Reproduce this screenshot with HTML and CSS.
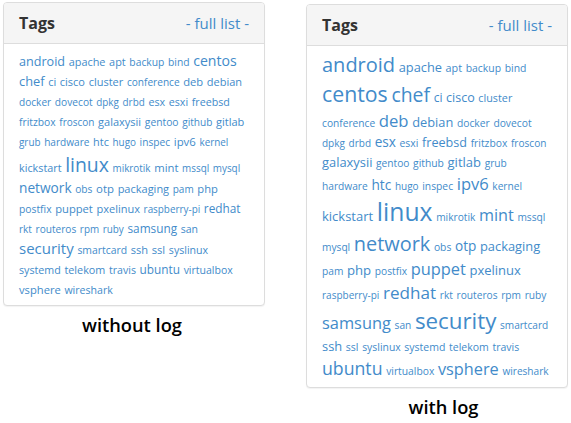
FILE: index.html
```html
<!DOCTYPE html>
<html lang="en">
<head>
<meta charset="utf-8">
<title>Tags</title>
<link rel="stylesheet" href="styles.css">
</head>
<body>
<div class="page">
  <div class="col col-a">
    <div class="panel">
      <div class="panel-heading">
        <h3 class="panel-title">Tags</h3>
        <a class="full-list" href="#">- full list -</a>
      </div>
      <div class="panel-body panel-body-a">
        <a class="tag" href="#" style="font-size:12.6px">android</a>
        <a class="tag" href="#" style="font-size:10.9px">apache</a>
        <a class="tag" href="#" style="font-size:10.9px">apt</a>
        <a class="tag" href="#" style="font-size:10.3px">backup</a>
        <a class="tag" href="#" style="font-size:10.3px">bind</a>
        <a class="tag" href="#" style="font-size:14.1px">centos</a>
        <a class="tag" href="#" style="font-size:12.8px">chef</a>
        <a class="tag" href="#" style="font-size:11px">ci</a>
        <a class="tag" href="#" style="font-size:11px">cisco</a>
        <a class="tag" href="#" style="font-size:11px">cluster</a>
        <a class="tag" href="#" style="font-size:10.1px">conference</a>
        <a class="tag" href="#" style="font-size:11.2px">deb</a>
        <a class="tag" href="#" style="font-size:11px">debian</a>
        <a class="tag" href="#" style="font-size:10.1px">docker</a>
        <a class="tag" href="#" style="font-size:10.2px">dovecot</a>
        <a class="tag" href="#" style="font-size:9.9px">dpkg</a>
        <a class="tag" href="#" style="font-size:9.9px">drbd</a>
        <a class="tag" href="#" style="font-size:10.7px">esx</a>
        <a class="tag" href="#" style="font-size:10.7px">esxi</a>
        <a class="tag" href="#" style="font-size:10.7px">freebsd</a>
        <a class="tag" href="#" style="font-size:10.3px">fritzbox</a>
        <a class="tag" href="#" style="font-size:10px">froscon</a>
        <a class="tag" href="#" style="font-size:11px">galaxysii</a>
        <a class="tag" href="#" style="font-size:10.3px">gentoo</a>
        <a class="tag" href="#" style="font-size:10.1px">github</a>
        <a class="tag" href="#" style="font-size:11px">gitlab</a>
        <a class="tag" href="#" style="font-size:9.9px">grub</a>
        <a class="tag" href="#" style="font-size:10.1px">hardware</a>
        <a class="tag" href="#" style="font-size:10.9px">htc</a>
        <a class="tag" href="#" style="font-size:9.9px">hugo</a>
        <a class="tag" href="#" style="font-size:10.2px">inspec</a>
        <a class="tag" href="#" style="font-size:11.4px">ipv6</a>
        <a class="tag" href="#" style="font-size:9.9px">kernel</a>
        <a class="tag" href="#" style="font-size:10.8px">kickstart</a>
        <a class="tag" href="#" style="font-size:19.4px">linux</a>
        <a class="tag" href="#" style="font-size:9.9px">mikrotik</a>
        <a class="tag" href="#" style="font-size:11.3px">mint</a>
        <a class="tag" href="#" style="font-size:9.9px">mssql</a>
        <a class="tag" href="#" style="font-size:9.9px">mysql</a>
        <a class="tag" href="#" style="font-size:13.7px">network</a>
        <a class="tag" href="#" style="font-size:10.2px">obs</a>
        <a class="tag" href="#" style="font-size:11.4px">otp</a>
        <a class="tag" href="#" style="font-size:11px">packaging</a>
        <a class="tag" href="#" style="font-size:10px">pam</a>
        <a class="tag" href="#" style="font-size:11.2px">php</a>
        <a class="tag" href="#" style="font-size:10.3px">postfix</a>
        <a class="tag" href="#" style="font-size:11.2px">puppet</a>
        <a class="tag" href="#" style="font-size:11px">pxelinux</a>
        <a class="tag" href="#" style="font-size:9.9px">raspberry-pi</a>
        <a class="tag" href="#" style="font-size:11.8px">redhat</a>
        <a class="tag" href="#" style="font-size:10px">rkt</a>
        <a class="tag" href="#" style="font-size:10.1px">routeros</a>
        <a class="tag" href="#" style="font-size:9.9px">rpm</a>
        <a class="tag" href="#" style="font-size:9.9px">ruby</a>
        <a class="tag" href="#" style="font-size:11.8px">samsung</a>
        <a class="tag" href="#" style="font-size:10.5px">san</a>
        <a class="tag" href="#" style="font-size:15px">security</a>
        <a class="tag" href="#" style="font-size:10.4px">smartcard</a>
        <a class="tag" href="#" style="font-size:11.1px">ssh</a>
        <a class="tag" href="#" style="font-size:11.2px">ssl</a>
        <a class="tag" href="#" style="font-size:10.6px">syslinux</a>
        <a class="tag" href="#" style="font-size:10.7px">systemd</a>
        <a class="tag" href="#" style="font-size:10.8px">telekom</a>
        <a class="tag" href="#" style="font-size:10.6px">travis</a>
        <a class="tag" href="#" style="font-size:11.8px">ubuntu</a>
        <a class="tag" href="#" style="font-size:10.5px">virtualbox</a>
        <a class="tag" href="#" style="font-size:11.2px">vsphere</a>
        <a class="tag" href="#" style="font-size:10.6px">wireshark</a>
      </div>
    </div>
    <p class="caption caption-a">without log</p>
  </div>

  <div class="col col-b">
    <div class="panel">
      <div class="panel-heading">
        <h3 class="panel-title">Tags</h3>
        <a class="full-list" href="#">- full list -</a>
      </div>
      <div class="panel-body">
        <a class="tag" href="#" style="font-size:20px">android</a>
        <a class="tag" href="#" style="font-size:12.8px">apache</a>
        <a class="tag" href="#" style="font-size:10.8px">apt</a>
        <a class="tag" href="#" style="font-size:10.4px">backup</a>
        <a class="tag" href="#" style="font-size:10.4px">bind</a>
        <a class="tag" href="#" style="font-size:21.3px">centos</a>
        <a class="tag" href="#" style="font-size:19.4px">chef</a>
        <a class="tag" href="#" style="font-size:12px">ci</a>
        <a class="tag" href="#" style="font-size:12.5px">cisco</a>
        <a class="tag" href="#" style="font-size:10.8px">cluster</a>
        <a class="tag" href="#" style="font-size:10.2px">conference</a>
        <a class="tag" href="#" style="font-size:16.7px">deb</a>
        <a class="tag" href="#" style="font-size:12.8px">debian</a>
        <a class="tag" href="#" style="font-size:10.3px">docker</a>
        <a class="tag" href="#" style="font-size:10.3px">dovecot</a>
        <a class="tag" href="#" style="font-size:10px">dpkg</a>
        <a class="tag" href="#" style="font-size:10px">drbd</a>
        <a class="tag" href="#" style="font-size:13.6px">esx</a>
        <a class="tag" href="#" style="font-size:10.4px">esxi</a>
        <a class="tag" href="#" style="font-size:12.6px">freebsd</a>
        <a class="tag" href="#" style="font-size:10.3px">fritzbox</a>
        <a class="tag" href="#" style="font-size:10.1px">froscon</a>
        <a class="tag" href="#" style="font-size:12.9px">galaxysii</a>
        <a class="tag" href="#" style="font-size:10.2px">gentoo</a>
        <a class="tag" href="#" style="font-size:10.3px">github</a>
        <a class="tag" href="#" style="font-size:13px">gitlab</a>
        <a class="tag" href="#" style="font-size:10.2px">grub</a>
        <a class="tag" href="#" style="font-size:10.2px">hardware</a>
        <a class="tag" href="#" style="font-size:13.7px">htc</a>
        <a class="tag" href="#" style="font-size:10px">hugo</a>
        <a class="tag" href="#" style="font-size:10.3px">inspec</a>
        <a class="tag" href="#" style="font-size:16.5px">ipv6</a>
        <a class="tag" href="#" style="font-size:10.2px">kernel</a>
        <a class="tag" href="#" style="font-size:13px">kickstart</a>
        <a class="tag" href="#" style="font-size:24.7px">linux</a>
        <a class="tag" href="#" style="font-size:10.2px">mikrotik</a>
        <a class="tag" href="#" style="font-size:16.2px">mint</a>
        <a class="tag" href="#" style="font-size:10.2px">mssql</a>
        <a class="tag" href="#" style="font-size:10.2px">mysql</a>
        <a class="tag" href="#" style="font-size:19.9px">network</a>
        <a class="tag" href="#" style="font-size:10.3px">obs</a>
        <a class="tag" href="#" style="font-size:13.6px">otp</a>
        <a class="tag" href="#" style="font-size:12.9px">packaging</a>
        <a class="tag" href="#" style="font-size:10.2px">pam</a>
        <a class="tag" href="#" style="font-size:13.2px">php</a>
        <a class="tag" href="#" style="font-size:10.2px">postfix</a>
        <a class="tag" href="#" style="font-size:16.4px">puppet</a>
        <a class="tag" href="#" style="font-size:13px">pxelinux</a>
        <a class="tag" href="#" style="font-size:10px">raspberry-pi</a>
        <a class="tag" href="#" style="font-size:17.1px">redhat</a>
        <a class="tag" href="#" style="font-size:10.2px">rkt</a>
        <a class="tag" href="#" style="font-size:10.2px">routeros</a>
        <a class="tag" href="#" style="font-size:10.2px">rpm</a>
        <a class="tag" href="#" style="font-size:10.2px">ruby</a>
        <a class="tag" href="#" style="font-size:16.4px">samsung</a>
        <a class="tag" href="#" style="font-size:10.2px">san</a>
        <a class="tag" href="#" style="font-size:22.3px">security</a>
        <a class="tag" href="#" style="font-size:10.1px">smartcard</a>
        <a class="tag" href="#" style="font-size:12.9px">ssh</a>
        <a class="tag" href="#" style="font-size:10.5px">ssl</a>
        <a class="tag" href="#" style="font-size:10.4px">syslinux</a>
        <a class="tag" href="#" style="font-size:10.5px">systemd</a>
        <a class="tag" href="#" style="font-size:10.5px">telekom</a>
        <a class="tag" href="#" style="font-size:10.5px">travis</a>
        <a class="tag" href="#" style="font-size:17.7px">ubuntu</a>
        <a class="tag" href="#" style="font-size:10.3px">virtualbox</a>
        <a class="tag" href="#" style="font-size:16.3px">vsphere</a>
        <a class="tag" href="#" style="font-size:10.1px">wireshark</a>
      </div>
    </div>
    <p class="caption caption-b">with log</p>
  </div>
</div>
</body>
</html>
```
FILE: styles.css
```css
body {
  margin: 0;
  font-family: "Open Sans", "DejaVu Sans", sans-serif;
  font-size: 14px;
  line-height: 1.42857;
  color: #333;
  background: #fff;
}

.page {
  display: flex;
  align-items: flex-start;
}

.col {
  width: 262px;
}

.col-a {
  margin: 2px 0 0 3px;
}

.col-b {
  margin: 4px 0 0 41px;
}

.panel {
  background: #fff;
  border: 1px solid #ddd;
  border-radius: 4px;
  box-shadow: 0 1px 1px rgba(0, 0, 0, 0.05);
}

.panel-heading {
  display: flex;
  justify-content: space-between;
  align-items: baseline;
  padding: 10px 15px;
  background: #f5f5f5;
  border-bottom: 1px solid #ddd;
  border-radius: 3px 3px 0 0;
}

.panel-title {
  margin: 0;
  font-size: 16px;
  line-height: 20px;
  font-weight: 700;
  color: #333;
}

.full-list {
  font-size: 15px;
  line-height: 20px;
  color: #428bca;
  text-decoration: none;
}

.panel-body {
  padding: 5px 15px 6px;
}

.panel-body-a {
  padding-top: 7px;
}

.tag {
  color: #428bca;
  text-decoration: none;
  white-space: nowrap;
  line-height: 1.4;
}

.caption {
  margin: 6px 0 0;
  text-align: center;
  font-size: 18.3px;
  line-height: 26px;
  font-weight: 600;
  color: #000;
}

.caption-a {
  padding-right: 4px;
}

.caption-b {
  padding-left: 13px;
}
```
